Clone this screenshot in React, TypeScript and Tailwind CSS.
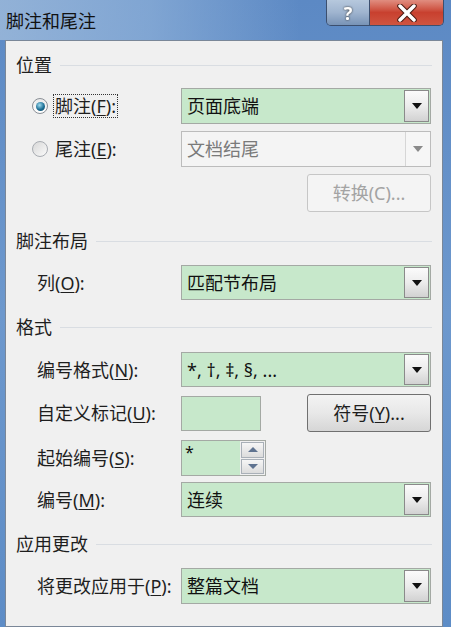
import React from 'react';

const font = { fontFamily: '"Noto Sans", "Noto Sans CJK SC", sans-serif' };

// small underlined access key
const U = ({ k }: { k: string }) => <span className="underline underline-offset-2">{k}</span>;

const Heading = ({ text, cls }: { text: string; cls: string }) => (
  <div className={`flex items-center h-[26px] ${cls}`}>
    <span className="text-[18px] leading-none text-[#1e1e1e]">{text}</span>
    <div className="flex-1 ml-[8px] mr-[10px] h-px bg-[#d9dde2]" />
  </div>
);

const Arrow = ({ color }: { color: string }) => (
  <svg width="10" height="6" viewBox="0 0 10 6">
    <path d="M0 0H10L5 6Z" fill={color} />
  </svg>
);

const Combo = ({ value, disabled }: { value: string; disabled?: boolean }) => (
  <div
    className={`w-[250px] h-full flex border ${
      disabled ? 'border-[#bcbcbc] bg-[#f4f4f4]' : 'border-[#a4a9a4] bg-[#c7e8cb]'
    }`}
  >
    <div
      className={`flex-1 flex items-center pl-[5px] text-[18px] leading-none ${
        disabled ? 'text-[#7a7a7a]' : 'text-[#111]'
      }`}
    >
      {value}
    </div>
    {disabled ? (
      <div className="w-[25px] flex items-center justify-center border-l border-[#d6d6d6] bg-[#f6f6f6]">
        <Arrow color="#8a8a8a" />
      </div>
    ) : (
      <div className="w-[25px] m-px flex items-center justify-center border border-[#8a8a8a] bg-gradient-to-b from-[#fbfbfb] via-[#ececec] to-[#d2d2d2]">
        <Arrow color="#111" />
      </div>
    )}
  </div>
);

const Row = ({ h, cls, children }: { h: string; cls: string; children: React.ReactNode }) => (
  <div className={`flex items-center ${h} ${cls}`}>{children}</div>
);

const Label = ({ children }: { children: React.ReactNode }) => (
  <div className="w-[165px] pl-[21px] text-[18px] leading-none text-[#1e1e1e] whitespace-nowrap">{children}</div>
);

export default function App() {
  return (
    <div
      style={font}
      className="w-[451px] h-[627px] overflow-hidden bg-gradient-to-b from-[#5c89c4] via-[#6d98cd] to-[#5d8cc6] flex flex-col"
    >
      {/* title bar */}
      <div className="h-[40px] relative flex items-center">
        <div className="absolute left-0 top-0 w-[300px] h-[40px] bg-gradient-to-r from-[#a9c3df] via-[#8fb1d9] to-transparent opacity-70" />
        <span className="relative ml-[6px] mt-[2px] text-[18px] leading-none text-[#111]">脚注和尾注</span>
        <div className="absolute top-0 left-[326px] flex h-[26px] border border-t-0 border-[#3c4f6e] rounded-b-[5px] overflow-hidden">
          <div className="w-[43px] flex items-center justify-center border-r border-[#3c4f6e] bg-gradient-to-b from-[#b6c8dd] via-[#9fb4cf] to-[#7893b6]">
            <span className="text-white text-[18px] font-bold leading-none drop-shadow-[0_0_1px_#333]">?</span>
          </div>
          <div className="w-[73px] flex items-center justify-center bg-gradient-to-b from-[#e08d80] via-[#c8402f] to-[#cf5440]">
            <svg width="22" height="18" viewBox="0 0 22 18">
              <path d="M4 2L18 16M18 2L4 16" stroke="#4a1a12" strokeWidth="5.5" strokeLinecap="round" />
              <path d="M4 2L18 16M18 2L4 16" stroke="#ffffff" strokeWidth="3.5" strokeLinecap="round" />
            </svg>
          </div>
        </div>
      </div>

      {/* client panel */}
      <div className="ml-[5px] mr-[8px] flex-1 bg-[#f0f0f0] border border-[#7a8798] pl-[10px] flex flex-col">
        <Heading text="位置" cls="mt-[11px]" />

        <Row h="h-[36px]" cls="mt-[10px]">
          <div className="w-[165px] flex items-center pl-[16px]">
            <div className="w-[16px] h-[16px] rounded-full border border-[#8a8f96] bg-gradient-to-b from-[#eaeaea] to-[#ffffff] flex items-center justify-center">
              <div className="w-[9px] h-[9px] rounded-full bg-[radial-gradient(circle_at_40%_35%,#9fdcf0,#1d6f95_55%,#0d3e58)]" />
            </div>
            <span className="ml-[6px] px-px py-[2px] outline outline-1 outline-dotted outline-[#333] text-[18px] leading-none text-[#1e1e1e]">
              脚注(<U k="F" />):
            </span>
          </div>
          <Combo value="页面底端" />
        </Row>

        <Row h="h-[36px]" cls="mt-[7px]">
          <div className="w-[165px] flex items-center pl-[16px]">
            <div className="w-[16px] h-[16px] rounded-full border border-[#a8acb2] bg-gradient-to-br from-[#d8d8d8] to-[#fafafa]" />
            <span className="ml-[7px] text-[18px] leading-none text-[#1e1e1e]">
              尾注(<U k="E" />):
            </span>
          </div>
          <Combo value="文档结尾" disabled />
        </Row>

        <div className="mt-[7px] flex justify-end pr-[11px]">
          <div className="w-[124px] h-[38px] rounded-[3px] border border-[#c6c6c6] bg-[#f4f4f4] flex items-center justify-center text-[18px] leading-none text-[#a3a3a3]">
            转换(C)...
          </div>
        </div>

        <Heading text="脚注布局" cls="mt-[16px]" />
        <Row h="h-[35px]" cls="mt-[11px]">
          <Label>
            列(<U k="O" />):
          </Label>
          <Combo value="匹配节布局" />
        </Row>

        <Heading text="格式" cls="mt-[14px]" />
        <Row h="h-[35px]" cls="mt-[12px]">
          <Label>
            编号格式(<U k="N" />):
          </Label>
          <Combo value="*, †, ‡, §, ..." />
        </Row>

        <Row h="h-[38px]" cls="mt-[7px]">
          <Label>
            自定义标记(<U k="U" />):
          </Label>
          <div className="w-[80px] h-[35px] border border-[#a4a9a4] bg-[#c7e8cb]" />
          <div className="ml-[46px] w-[124px] h-[38px] rounded-[3px] border border-[#707070] bg-gradient-to-b from-[#f3f3f3] via-[#e8e8e8] to-[#d6d6d6] flex items-center justify-center text-[18px] leading-none text-[#1e1e1e]">
            符号(<U k="Y" />)...
          </div>
        </Row>

        <Row h="h-[36px]" cls="mt-[8px]">
          <Label>
            起始编号(<U k="S" />):
          </Label>
          <div className="w-[85px] h-[36px] border border-[#a4a9a4] bg-[#f0f0f0] flex">
            <div className="w-[58px] bg-[#c7e8cb] pl-[3px] pt-[3px] text-[16px] leading-none text-[#111]">*</div>
            <div className="flex-1 flex flex-col gap-px p-px">
              <div className="flex-1 border border-[#a9b0b8] bg-gradient-to-b from-[#f6f6f6] to-[#dcdcdc] flex items-center justify-center">
                <svg width="10" height="5" viewBox="0 0 10 5"><path d="M0 5H10L5 0Z" fill="#5f7390" /></svg>
              </div>
              <div className="flex-1 border border-[#a9b0b8] bg-gradient-to-b from-[#f6f6f6] to-[#dcdcdc] flex items-center justify-center">
                <svg width="10" height="5" viewBox="0 0 10 5"><path d="M0 0H10L5 5Z" fill="#5f7390" /></svg>
              </div>
            </div>
          </div>
        </Row>

        <Row h="h-[35px]" cls="mt-[6px]">
          <Label>
            编号(<U k="M" />):
          </Label>
          <Combo value="连续" />
        </Row>

        <Heading text="应用更改" cls="mt-[14px]" />
        <Row h="h-[36px]" cls="mt-[11px]">
          <Label>
            将更改应用于(<U k="P" />):
          </Label>
          <Combo value="整篇文档" />
        </Row>
      </div>
    </div>
  );
}
